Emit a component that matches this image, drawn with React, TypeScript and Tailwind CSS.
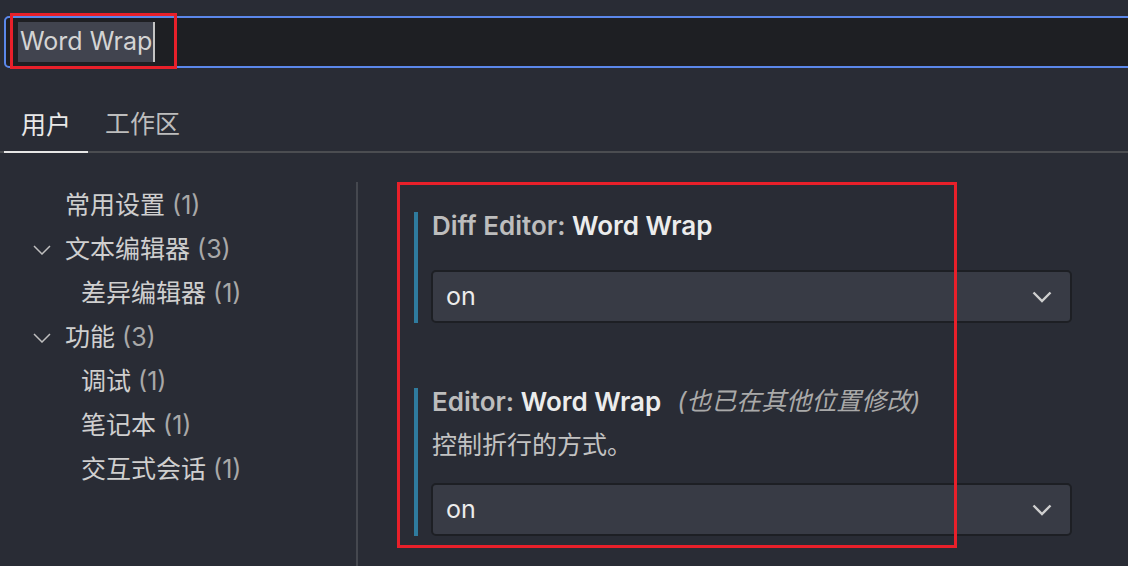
import React from "react";

const FONT = { fontFamily: '"Inter", "Noto Sans CJK SC", sans-serif' };

function TreeChevron() {
  return (
    <svg width="18" height="10" viewBox="0 0 18 10" className="shrink-0">
      <polyline points="1,1 9,9 17,1" fill="none" stroke="#bfbfbf" strokeWidth="1.5" />
    </svg>
  );
}

function SelectChevron() {
  return (
    <svg width="20" height="12" viewBox="0 0 20 12">
      <polyline points="1.5,1.5 10,10 18.5,1.5" fill="none" stroke="#cfcfcf" strokeWidth="2.4" />
    </svg>
  );
}

function TreeItem({ label, count, level, expandable }: { label: string; count: string; level: number; expandable?: boolean }) {
  return (
    <div className="h-[44px] flex items-center">
      {expandable ? (
        <div className="w-[65px] pl-[33px] flex items-center">
          <TreeChevron />
        </div>
      ) : (
        <div className={level === 1 ? "w-[65px]" : "w-[81px]"} />
      )}
      <span className="text-[25px] text-[#cfcfcf] whitespace-nowrap">
        {label} <span className="text-[#a8a8a8]">{count}</span>
      </span>
    </div>
  );
}

function Select() {
  return (
    <div className="h-[53px] w-[641px] bg-[#383b45] border-2 border-[#1d1f24] rounded-[5px] flex items-center justify-between pl-[13px] pr-[18px]">
      <span className="text-[25px] text-[#ececec]">on</span>
      <SelectChevron />
    </div>
  );
}

export default function App() {
  return (
    <div className="w-[1128px] h-[566px] bg-[#292c35] overflow-hidden relative" style={FONT}>
      {/* search */}
      <div className="pt-[16px] pl-[4px]">
        <div className="h-[52px] w-[1140px] border-2 border-[#5b87ea] rounded-l-[5px] bg-[#1e1f23] flex items-center pl-[12px]">
          <div className="h-[40px] bg-[#41444f] flex items-center pl-[2px] pr-[1px] text-[25px] text-[#d4d4d4] whitespace-nowrap">
            Word Wrap
          </div>
          <div className="h-[40px] w-[2px] bg-[#c4c4c4]" />
        </div>
      </div>
      {/* tabs */}
      <div className="mt-[30px] pl-[4px] flex items-end h-[55px] border-b-2 border-[#4b4d51] relative">
        <div className="h-full w-[84px] flex items-center justify-center text-[25px] text-[#e8e8e8] border-b-2 border-[#e6e6e6] -mb-[2px]">
          用户
        </div>
        <div className="h-full flex items-center pl-[17px] text-[25px] text-[#bdbdbd]">工作区</div>
      </div>
      {/* body */}
      <div className="flex pt-[29px]">
        <div className="w-[356px] shrink-0 pt-[2px]">
          <TreeItem label="常用设置" count="(1)" level={1} />
          <TreeItem label="文本编辑器" count="(3)" level={1} expandable />
          <TreeItem label="差异编辑器" count="(1)" level={2} />
          <TreeItem label="功能" count="(3)" level={1} expandable />
          <TreeItem label="调试" count="(1)" level={2} />
          <TreeItem label="笔记本" count="(1)" level={2} />
          <TreeItem label="交互式会话" count="(1)" level={2} />
        </div>
        <div className="w-[2px] h-[400px] bg-[#45484f] shrink-0" />
        <div className="pl-[56px] pt-[30px] flex flex-col gap-[65px]">
          <div className="flex">
            <div className="w-[4px] bg-[#2f7b9e] shrink-0" />
            <div className="pl-[14px]">
              <div className="h-[27px] flex items-center text-[26px] font-semibold whitespace-nowrap">
                <span className="text-[#bdbdbd]">Diff Editor:&nbsp;</span>
                <span className="text-[#ececec]">Word Wrap</span>
              </div>
              <div className="mt-[31px] -ml-[1px]">
                <Select />
              </div>
            </div>
          </div>
          <div className="flex">
            <div className="w-[4px] bg-[#2f7b9e] shrink-0" />
            <div className="pl-[14px]">
              <div className="h-[27px] flex items-center text-[26px] whitespace-nowrap">
                <span className="text-[#bdbdbd] font-semibold">Editor:&nbsp;</span>
                <span className="text-[#ececec] font-semibold">Word Wrap</span>
                <span className="text-[#a9a9a9] italic text-[25px] ml-[16px]">(也已在其他位置修改)</span>
              </div>
              <div className="mt-[17px] h-[28px] flex items-center text-[25px] text-[#c2c2c2]">控制折行的方式。</div>
              <div className="mt-[23px] -ml-[1px]">
                <Select />
              </div>
            </div>
          </div>
        </div>
      </div>
      {/* annotation boxes */}
      <div className="absolute left-[10px] top-[13px] w-[167px] h-[56px] border-[3px] border-[#e8202a]" />
      <div className="absolute left-[397px] top-[182px] w-[560px] h-[366px] border-[3px] border-[#e8202a]" />
    </div>
  );
}
